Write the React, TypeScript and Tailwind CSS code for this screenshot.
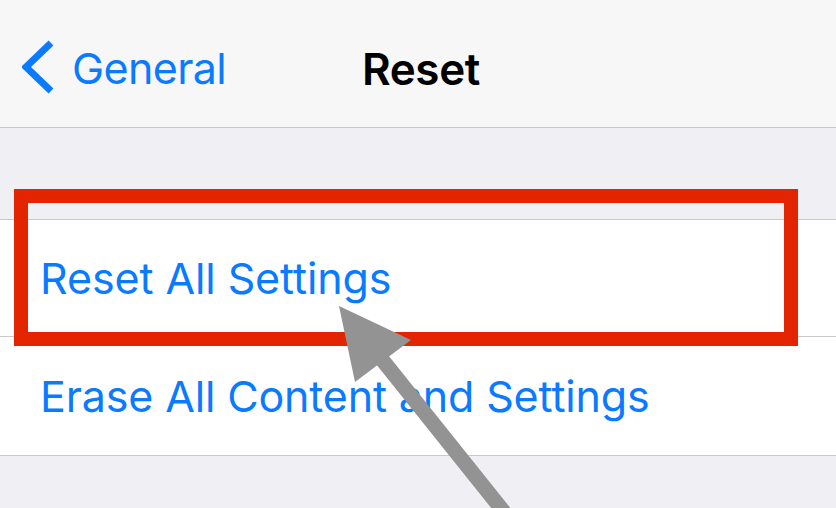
import React from "react";

export default function App() {
  return (
    <div
      className="relative w-[836px] h-[508px] overflow-hidden bg-[#efeff4]"
      style={{ fontFamily: "Inter, 'Noto Sans', sans-serif" }}
    >
      {/* Navigation bar */}
      <div className="h-[128px] bg-[#f7f7f8] border-b border-[#c8c7cc] flex items-center pt-[10px] relative">
        <div className="flex items-center pl-[22px]">
          <svg width="36" height="58" viewBox="0 0 36 58" className="mr-[14px]">
            <path d="M29 3 L4 27 L29 51" fill="none" stroke="#0a7aff" strokeWidth="7" strokeLinejoin="miter" />
          </svg>
          <span className="text-[43px] leading-none text-[#0a7aff] tracking-[-0.6px]">General</span>
        </div>
        <div className="absolute left-[362px] top-[0px] h-[128px] flex items-center pt-[10px]">
          <span className="text-[44px] leading-none font-semibold text-black tracking-[-0.4px]">Reset</span>
        </div>
      </div>

      {/* Group spacer */}
      <div className="h-[92px] border-b border-[#c8c7cc]" />

      {/* Rows */}
      <div className="bg-white">
        <div className="h-[117px] border-b border-[#c8c7cc] flex items-center pl-[40px]">
          <span className="text-[43px] leading-none text-[#0a7aff] tracking-[-0.1px]">Reset All Settings</span>
        </div>
        <div className="h-[119px] border-b border-[#c8c7cc] flex items-center pl-[40px]">
          <span className="text-[43px] leading-none text-[#0a7aff] tracking-[-0.15px]">Erase All Content and Settings</span>
        </div>
      </div>

      {/* Red highlight box */}
      <div className="absolute left-[14px] top-[189px] w-[784px] h-[157px] border-[14px] border-[#e22400]" />

      {/* Arrow */}
      <svg className="absolute left-0 top-0" width="836" height="508" viewBox="0 0 836 508">
        <line x1="380" y1="357" x2="512" y2="522" stroke="#939393" strokeWidth="15" />
        <polygon points="339,306 411,340 355,382" fill="#939393" />
      </svg>
    </div>
  );
}
